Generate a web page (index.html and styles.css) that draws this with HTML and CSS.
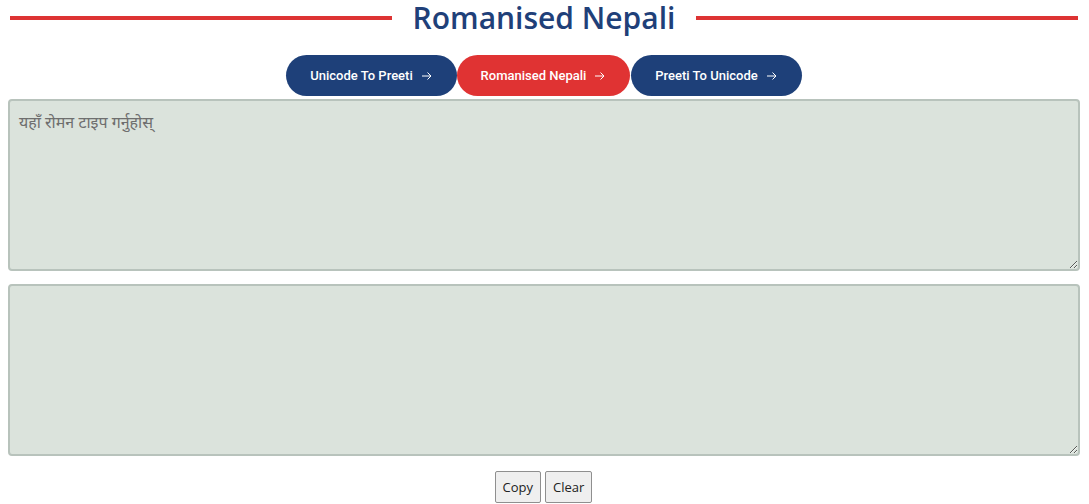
FILE: index.html
```html
<!DOCTYPE html>
<html lang="ne">
<head>
<meta charset="utf-8">
<title>Romanised Nepali</title>
<link rel="stylesheet" href="styles.css">
</head>
<body>
<header class="title-row">
  <span class="rule"></span>
  <h1 class="title">Romanised Nepali</h1>
  <span class="rule"></span>
</header>
<nav class="tabs">
  <a class="tab tab-navy" href="#">Unicode To Preeti <svg class="arrow" viewBox="0 0 10 8" width="10" height="8"><path d="M0 4H9M5.5 0.5L9 4L5.5 7.5" fill="none" stroke="#fff" stroke-width="1"/></svg></a>
  <a class="tab tab-red" href="#">Romanised Nepali <svg class="arrow" viewBox="0 0 10 8" width="10" height="8"><path d="M0 4H9M5.5 0.5L9 4L5.5 7.5" fill="none" stroke="#fff" stroke-width="1"/></svg></a>
  <a class="tab tab-navy tab-last" href="#">Preeti To Unicode <svg class="arrow" viewBox="0 0 10 8" width="10" height="8"><path d="M0 4H9M5.5 0.5L9 4L5.5 7.5" fill="none" stroke="#fff" stroke-width="1"/></svg></a>
</nav>
<main class="boxes">
  <textarea class="box" placeholder="यहाँ रोमन टाइप गर्नुहोस्"></textarea>
  <textarea class="box box-second"></textarea>
</main>
<div class="actions">
  <button class="btn" type="button">Copy</button>
  <button class="btn" type="button">Clear</button>
</div>
</body>
</html>
```
FILE: styles.css
```css
html, body {
  margin: 0;
  padding: 0;
  background: #ffffff;
}
body {
  padding: 0 8px;
  font-family: "Open Sans", "Noto Sans", sans-serif;
}
.title-row {
  display: flex;
  align-items: center;
  gap: 21px;
  padding: 0 3px 0 2px;
  height: 36px;
}
.rule {
  flex: 1;
  height: 4px;
  background: #dd3333;
}
.title {
  margin: 0;
  font-family: "Open Sans", sans-serif;
  font-weight: 600;
  font-size: 30px;
  line-height: 36px;
  color: #1f4079;
  letter-spacing: 0;
}
.tabs {
  display: flex;
  justify-content: center;
  margin-top: 19px;
  padding-right: 2px;
}
.tab {
  display: flex;
  align-items: center;
  justify-content: center;
  gap: 9px;
  height: 41px;
  width: 171px;
  border-radius: 21px;
  color: #ffffff;
  text-decoration: none;
  font-family: Roboto, "Noto Sans", sans-serif;
  font-weight: 500;
  font-size: 13px;
}
.tab-navy { background: #1e4079; }
.tab-red { background: #e03333; width: 173px; }
.tab-last { margin-left: 1px; }
.arrow {
  display: block;
}
.boxes {
  display: flex;
  flex-direction: column;
  gap: 13px;
  margin-top: 3px;
}
.box {
  display: block;
  box-sizing: border-box;
  width: 1072px;
  height: 172px;
  margin: 0;
  padding: 10px 9px;
  border: 2px solid #b8c3bc;
  border-radius: 4px;
  background: #dbe3dc;
  font-family: "Noto Sans", "Open Sans", sans-serif;
  font-size: 16px;
  color: #333333;
  resize: vertical;
  outline: none;
}
.box::placeholder {
  color: #6e6e6e;
}
.actions {
  display: flex;
  justify-content: center;
  gap: 4px;
  margin-top: 15px;
  padding-right: 2px;
}
.btn {
  height: 32px;
  padding: 0 7px;
  border: 1px solid #8f8f8f;
  border-radius: 2px;
  background: #efefef;
  font-family: "Open Sans", sans-serif;
  font-size: 13px;
  color: #222222;
}
```
